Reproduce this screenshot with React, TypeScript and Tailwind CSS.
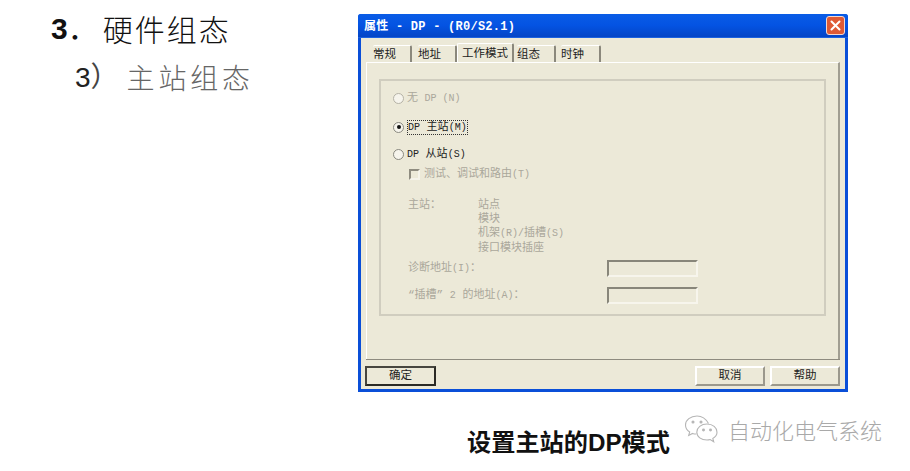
const cjk = "font-['Liberation_Mono','Noto_Sans_CJK_SC',monospace]";

function L({ children }: { children: string }) {
  return <span className="text-[10px]">{children}</span>;
}

function Radio({ checked, disabled }: { checked?: boolean; disabled?: boolean }) {
  return (
    <span className={`flex h-[11px] w-[11px] shrink-0 items-center justify-center rounded-full border bg-[#f6f4ec] ${disabled ? "border-[#b5b2a6]" : "border-[#8a8980]"}`}>
      {checked && <span className="h-[4px] w-[4px] rounded-full bg-[#111]" />}
    </span>
  );
}

function Tab({ label, active, w }: { label: string; active?: boolean; w: string }) {
  return (
    <div
      className={`flex shrink-0 items-center pt-[1px] text-[11.5px] text-[#222] ${w} ${
        active
          ? "relative z-10 -mt-[2px] h-[19px] rounded-t-[2px] border-r-2 border-t border-l border-r-[#8b887c] border-t-white border-l-white bg-[#ece9d8]"
          : "h-[17px] rounded-t-[2px] border-r-2 border-t border-r-[#8b887c] border-t-white"
      }`}
    >
      {label}
    </div>
  );
}

function FooterButton({ label, primary, w }: { label: string; primary?: boolean; w: string }) {
  return (
    <div
      className={`flex h-[20px] items-center justify-center text-[11.5px] text-[#222] ${w} ${
        primary
          ? "border-2 border-t-[#47463f] border-r-[#2b2a25] border-b-[#2b2a25] border-l-[#47463f] bg-[#ece9d8]"
          : "border-2 border-t-white border-r-[#9b988c] border-b-[#9b988c] border-l-white bg-[#ece9d8]"
      }`}
    >
      {label}
    </div>
  );
}

function Sunken() {
  return <div className="h-[17px] w-[91px] border-2 border-t-[#88867a] border-r-[#f7f5ec] border-b-[#f7f5ec] border-l-[#88867a] bg-[#ece9d8]" />;
}

function WeChat() {
  return (
    <svg width="36" height="30" viewBox="0 0 36 30" fill="none" stroke="#b5b5b5" strokeWidth="1.1">
      <path d="M13 2C6.500 2 1.500 6 1.500 11c0 3 1.600 5.400 4.200 7l-1 3.400 3.800-2c1.200.4 2.400.6 3.600.6" />
      <path d="M24.500 9.500C22 5 18 2 13 2" />
      <path d="M23 10c-5.800 0-10.200 3.600-10.200 8.200S17.200 26 23 26c1.100 0 2.200-.2 3.200-.5l3.500 2.200-.9-3.300c2.600-1.500 4.200-3.900 4.200-6.200C33 13.600 28.800 10 23 10z" />
      <circle cx="9" cy="8" r="1" fill="#b5b5b5" />
      <circle cx="17" cy="8" r="1" fill="#b5b5b5" />
      <circle cx="19.500" cy="16" r=".9" fill="#b5b5b5" />
      <circle cx="26.500" cy="16" r=".9" fill="#b5b5b5" />
    </svg>
  );
}

export default function App() {
  return (
    <div className="flex h-[471px] w-[910px] flex-col overflow-hidden bg-white font-['Liberation_Sans','Noto_Sans_CJK_SC',sans-serif]">
      <div className="flex pt-[14px]">
        <div className="w-[358px] shrink-0 pl-[51px]">
          <div className="-mt-[2px] flex h-[33px] items-center text-[30px] leading-[33px] text-[#111]">
            <span className="font-bold">3</span>
            <span className="w-[35px]">．</span>
            <span className="font-['Noto_Sans_CJK_SC',sans-serif] font-light tracking-[2px]">硬件组态</span>
          </div>
          <div className="mt-[16px] flex h-[33px] items-center pl-[24px] text-[28px] leading-[33px] text-[#555]">
            <span className="text-[#222]">3</span>
            <span className="w-[36px] text-[#444]">）</span>
            <span className="font-['Noto_Sans_CJK_SC',sans-serif] font-light tracking-[3.800px] text-[#666]">主站组态</span>
          </div>
        </div>

        {/* window */}
        <div className="flex h-[378px] w-[490px] shrink-0 flex-col rounded-t-[3px] border-x-[3px] border-b-[3px] border-x-[#0a4fd8] border-b-[#0a4fd8] bg-[#ece9d8]">
          <div className="-mx-[3px] flex h-[24px] shrink-0 items-center justify-between rounded-t-[3px] border-b border-b-[#1c62e0] bg-gradient-to-b from-[#0a5ce6] via-[#0453e2] to-[#0445c6] pl-[6px] pr-[3px]">
            <span className={`${cjk} pt-[2px] text-[12px] font-bold tracking-[0.25px] text-white`}>属性 - DP - (R0/S2.1)</span>
            <span className="flex h-[19px] w-[19px] items-center justify-center rounded-[3px] border border-[#f3d8cf] bg-[#df5a35]">
              <svg width="11" height="11" viewBox="0 0 11 11" stroke="white" strokeWidth="2" strokeLinecap="round">
                <path d="M1.500 1.500l8 8M9.500 1.500l-8 8" />
              </svg>
            </span>
          </div>

          <div className="ml-[5px] mt-[4px] flex h-[20px] items-end">
            <div className="pl-[7px]"><Tab label="常规" w="w-[39px]" /></div>
            <div className="pl-[6px]"><Tab label="地址" w="w-[39px]" /></div>
            <div><Tab label="工作模式" active w="w-[57px] pl-[4px]" /></div>
            <div className="pl-[3px]"><Tab label="组态" w="w-[39px]" /></div>
            <div className="pl-[5px]"><Tab label="时钟" w="w-[40px]" /></div>
          </div>

          <div className="ml-[5px] mr-[5px] flex h-[297px] flex-col border-r-2 border-t border-l border-r-[#a19e92] border-t-white border-l-white px-[12px] pt-[16px]">
            <div className={`${cjk} flex h-[237px] w-[447px] flex-col border-2 border-[#d0cdbf] pl-[12px] text-[11px]`}>
              <div className="mt-[10px] flex h-[14px] items-center gap-[3px] text-[#aaa79b]">
                <Radio disabled />
                <span>无 <L>DP (N)</L></span>
              </div>
              <div className="mt-[15px] flex h-[14px] items-center gap-[3px] text-[#222]">
                <Radio checked />
                <span className="border border-dotted border-[#333] leading-[12px]"><L>DP</L> 主站<L>(M)</L></span>
              </div>
              <div className="mt-[13px] flex h-[14px] items-center gap-[3px] text-[#222]">
                <Radio />
                <span><L>DP</L> 从站<L>(S)</L></span>
              </div>
              <div className="ml-[16px] mt-[6px] flex h-[14px] items-center gap-[4px] text-[#aaa79b]">
                <span className="h-[11px] w-[11px] border-2 border-t-[#8f8c80] border-r-[#f5f3ea] border-b-[#f5f3ea] border-l-[#8f8c80]" />
                <span>测试、调试和路由<L>(T)</L></span>
              </div>
              <div className="ml-[15px] mt-[17px] flex text-[#aaa79b]">
                <span className="w-[70px] leading-[14px]">主站：</span>
                <div className="flex flex-col leading-[14px]">
                  <span>站点</span>
                  <span>模块</span>
                  <span>机架<L>(R)/</L>插槽<L>(S)</L></span>
                  <span>接口模块插座</span>
                </div>
              </div>
              <div className="ml-[15px] mt-[5px] flex h-[17px] items-center justify-between pr-[126px] text-[#aaa79b]">
                <span>诊断地址<L>(I)</L>：</span>
                <Sunken />
              </div>
              <div className="ml-[15px] mt-[10px] flex h-[17px] items-center justify-between pr-[126px] text-[#aaa79b]">
                <span>“插槽” <L>2</L> 的地址<L>(A)</L>：</span>
                <Sunken />
              </div>
            </div>
          </div>
          <div className="ml-[5px] mr-[5px] h-[1px] bg-[#8e8b7f]" />

          <div className={`${cjk} ml-[4px] mr-[5px] mt-[6px] flex items-center`}>
            <FooterButton label="确定" primary w="w-[71px]" />
            <div className="flex-1" />
            <FooterButton label="取消" w="w-[70px]" />
            <div className="w-[5px]" />
            <FooterButton label="帮助" w="w-[70px]" />
          </div>
        </div>
      </div>

      <div className="mt-[34px] flex items-end pl-[467px]">
        <span className="text-[24.200px] font-bold leading-[28px] text-[#111]">设置主站的DP模式</span>
        <div className="mb-[1px] ml-[14px] flex -translate-y-[12px] items-center gap-[8px]">
          <WeChat />
          <span className="font-['Noto_Sans_CJK_SC',sans-serif] text-[22px] font-light leading-[28px] text-[#a9a9a9]">自动化电气系统</span>
        </div>
      </div>
    </div>
  );
}
